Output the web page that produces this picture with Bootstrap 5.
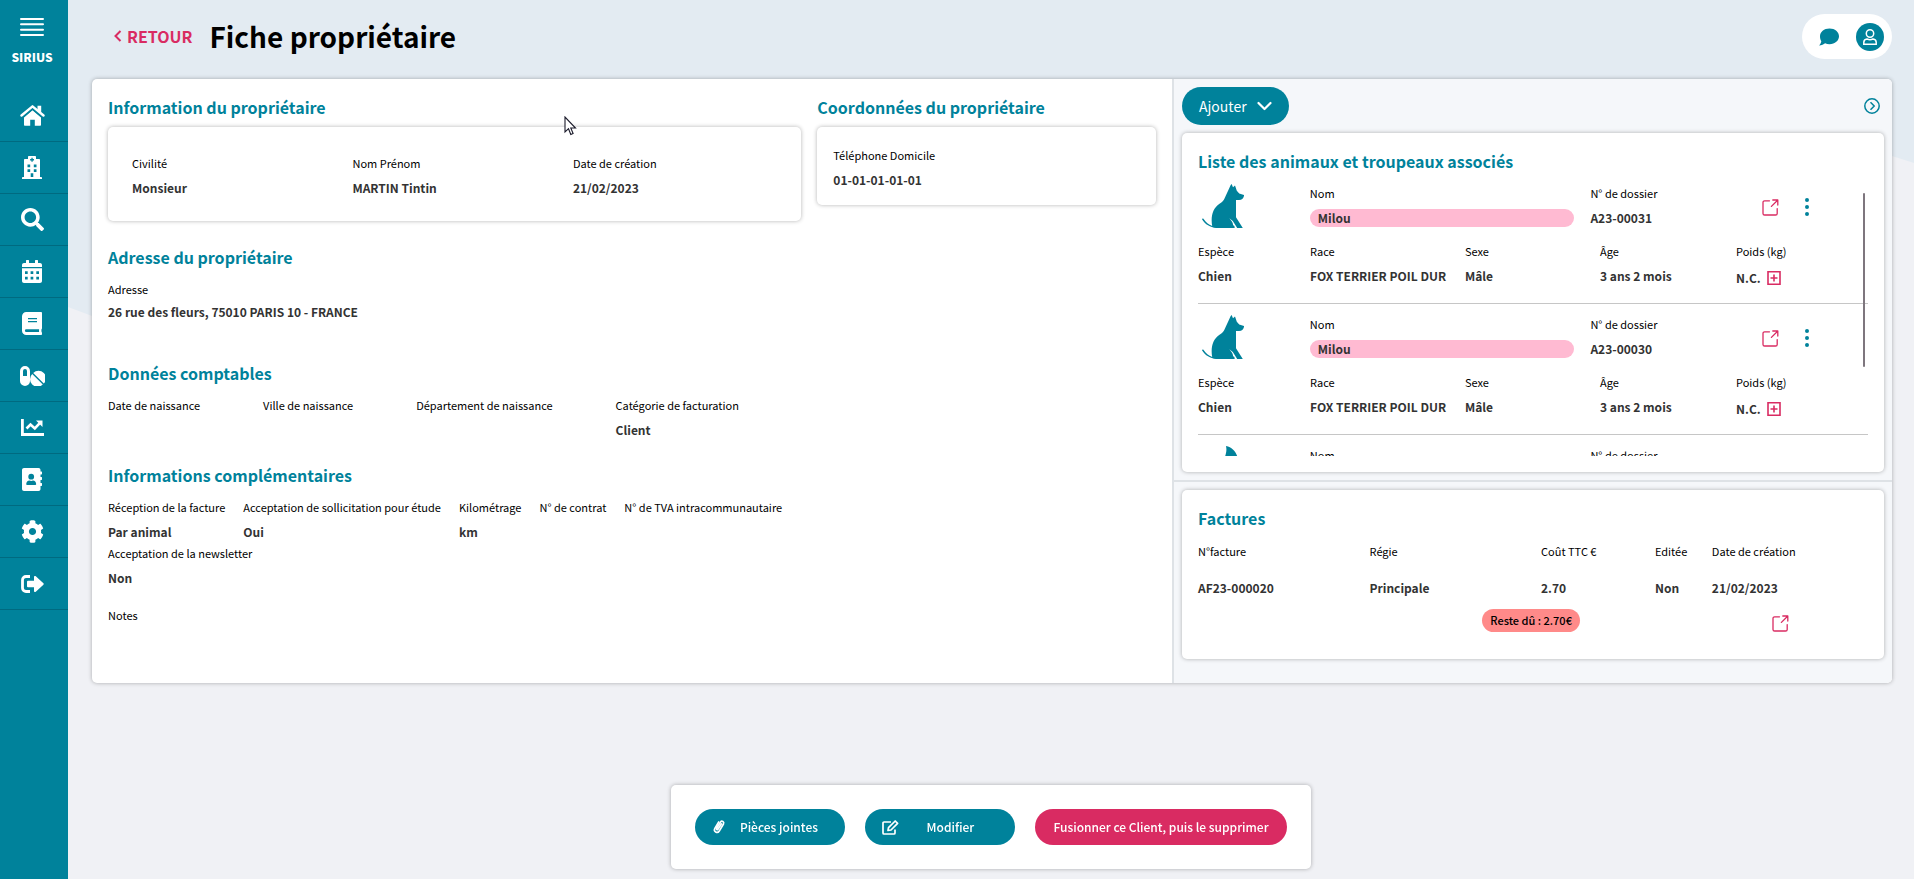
<!DOCTYPE html>
<html lang="fr">
<head>
<meta charset="utf-8">
<meta name="viewport" content="width=device-width, initial-scale=1">
<title>Sirius - Fiche propriétaire</title>
<link href="https://cdn.jsdelivr.net/npm/bootstrap@5.3.0/dist/css/bootstrap.min.css" rel="stylesheet">
<style>
  :root { --teal: #00829b; --pink: #d92b62; --line: #dee2e6; }
  body { font-family: "Noto Sans CJK SC", "Open Sans", sans-serif; font-size: 13px; color: #000; background: #f0f1f5; }
  svg { display: block; flex-shrink: 0; }

  .side-menu { width: 68px; background: var(--teal); }
  .side-menu .brand-box { height: 90px; padding: 18px 4px 0 0; gap: 10px; font-size: 12px; font-weight: 900; color: #fff; }
  .side-menu .brand-name { line-height: 22px; }
  .side-menu .nav-link { height: 52px; padding: 0 4px 0 0; border-bottom: 1px solid #006a80; color: #fff; }
  .side-menu .nav-link:hover { background: #00748b; }

  .page-area { min-width: 0; isolation: isolate; }
  .wave { position: absolute; inset: 0; width: 100%; height: 316px; z-index: -1; }
  .top-bar { padding: 14px 22px 20px 46px; }
  .back-link { font-size: 16px; font-weight: 700; line-height: 22px; padding-bottom: 2px; color: var(--pink); gap: 5px; }
  .page-title { font-size: 28px; font-weight: 700; line-height: 40px; padding-bottom: 2px; margin: 0 0 0 17px; }
  .user-pill { height: 45px; padding: 0 8px; gap: 16px; background: #fff; }

  .panel { border-radius: 5px; background: #fff; box-shadow: 0 0 4px rgba(0, 0, 0, .3); }
  .sheet { margin: 0 22px 110px 24px; overflow: hidden; }
  .sheet-left { width: 60%; padding: 16px; }
  .sheet-right { width: 40%; border-left: 2px solid var(--line); background: #f5f7fa; }
  .sheet-right .zone { padding: 8px; }
  .sheet-right .zone + .zone { border-top: 2px solid var(--line); padding-bottom: 24px; }

  .section-title { font-size: 16px; font-weight: 700; line-height: 24px; margin: 0; padding-bottom: 2px; color: var(--teal); }
  .fld-label { font-size: 11px; font-weight: 400; line-height: 18px; margin: 0; white-space: nowrap; }
  .fld-value { font-size: 12px; font-weight: 700; line-height: 24px; margin: 4px 0 0; color: #333; white-space: nowrap; }
  .id-card { margin-top: 6px; padding: 27px 24px 21px; }
  .phone-card { margin-top: 6px; padding: 19px 16px 13px; }
  .fields { margin-top: 9px; }
  .address .fld-value { margin-top: 2px; }
  .accounting { margin-top: 37px; }
  .accounting .fields { gap: 63px; }
  .extra { margin-top: 21px; }
  .extra .fields { gap: 18px; }

  .btn-pill { --bs-btn-color: #fff; --bs-btn-hover-color: #fff; --bs-btn-active-color: #fff; --bs-btn-bg: var(--teal); --bs-btn-hover-bg: #00748b; --bs-btn-active-bg: #006a80; border: 0; border-radius: 20px; }
  .btn-pink { --bs-btn-bg: var(--pink); --bs-btn-hover-bg: #c02455; --bs-btn-active-bg: #ab1f4b; }
  .btn-add { height: 38px; padding: 0 17px; font-size: 14px; gap: 10px; }
  .icon-btn { border: 0; padding: 0; background: none; color: var(--pink); }
  .icon-btn.teal { color: var(--teal); }
  .icon-btn.user-btn { width: 28px; height: 28px; background: var(--teal); color: #fff; }

  .side-card { padding: 17px 16px 16px; margin-top: 8px; }
  .side-card .section-title { line-height: 22px; padding-bottom: 1px; }
  .zone + .zone .side-card { margin-top: 0; padding-bottom: 27px; }
  .animal-list { height: 283px; overflow: hidden auto; scrollbar-width: none; }
  .animal-list::-webkit-scrollbar { display: none; }
  .animal { padding: 11px 0 15px; border-bottom: 1px solid #c6c6c6; }
  .animal-icon { color: var(--teal); }
  .animal-head, .animal-data { display: grid; }
  .animal-head { grid-template-columns: 112fr 281fr 166fr 28fr 46fr 38fr; margin-bottom: 12px; }
  .animal-data { grid-template-columns: 112fr 155fr 135fr 136fr 132fr; }
  .animal-data > div { min-width: 0; }
  .name-pill { margin: 7px 16px 0 0; padding-left: 8px; line-height: 18px; border-radius: 9px; background: #ffbad2; }
  .weight { line-height: 20px; padding-top: 4px; gap: 6px; }
  .scroll-thumb { position: absolute; top: 60px; right: 19px; width: 2px; height: 174px; border-radius: 1px; background: #7e767e; }

  .bill-table { table-layout: fixed; width: 100%; margin-top: 12px; }
  .bill-table th, .bill-table td { padding: 0; }
  .bill-table .fld-value { padding: 16px 0 9px; }
  .due { display: inline-block; padding: 0 8px; font-size: 11px; font-weight: 500; line-height: 23px; border-radius: 12px; background: #ff8a89; }
  .due-cell { padding-right: 75px !important; }
  .open-cell { padding-right: 79px !important; }

  .action-bar { left: 68px; bottom: 10px; pointer-events: none; }
  .action-bar .panel { padding: 24px; gap: 20px; pointer-events: auto; }
  .action-bar .btn { height: 36px; padding: 0 16px; font-size: 12px; font-weight: 500; }
  .action-bar .btn-icon { width: 150px; padding: 0 14px 0 17px; }
  .action-bar .btn-pink { padding: 0 18px; }
  .pointer { position: absolute; left: 496px; top: 116px; pointer-events: none; }
</style>
</head>
<body>
<svg class="d-none" aria-hidden="true">
  <symbol id="i-open" viewBox="0 0 17 17"><path d="M7.500 1.800H2.600A1.600 1.600 0 0 0 1 3.400v11A1.600 1.600 0 0 0 2.600 16h11a1.600 1.600 0 0 0 1.600-1.600V9.600M10.800 1h5v5M15.600 1.200 9.400 7.400" fill="none" stroke="currentColor" stroke-width="1.300" stroke-linecap="round" stroke-linejoin="round"/></symbol>
  <symbol id="i-dots" viewBox="0 0 4 18"><path d="M2 0a2 2 0 1 1 0 4 2 2 0 0 1 0-4zm0 7a2 2 0 1 1 0 4 2 2 0 0 1 0-4zm0 7a2 2 0 1 1 0 4 2 2 0 0 1 0-4z" fill="currentColor"/></symbol>
  <symbol id="i-plus" viewBox="0 0 14 14"><path d="M1 .8h12v12.400H1zM7 3.500v7M3.500 7h7" fill="none" stroke="currentColor" stroke-width="1.600"/></symbol>
  <symbol id="i-dog" viewBox="0 0 42 44"><path d="M22.500 14.500 28.700 1l.9-1 1.400 3.200L33 1.400l1.800 5.300 2.400 2.700 4.800 1.500c.2 2.600-1.700 4.900-5 5.200L34 16v17.200L40.800 44h-5.600L30.800 37l-3.400-2.700c2.200 2.700 3.700 4.600 3.700 7 .8.200 1.800.8 1.500 2.700H14C8.500 43.200 3 40.500 0 35.200c.3-.8 1-.8 1.600-.2 2.200 3.300 5 5.800 8.600 7-1.600-9 .2-17.500 7.300-22.300 2.900-1.600 4-3 5-5.200z" fill="currentColor"/></symbol>
  <symbol id="i-cat" viewBox="0 0 42 44"><path d="M24 0c6 1.200 9.500 5 11.500 11 1.500 6-3 8-5 9 5 8 5 16 4 24H14c-4-9 0-17 7-22-1-9 5-13 3-22z" fill="currentColor"/></symbol>
</svg>

<div class="d-flex min-vh-100">
  <nav class="side-menu nav flex-column flex-nowrap flex-shrink-0" aria-label="Menu principal">
    <div class="brand-box d-flex flex-column align-items-center">
      <button type="button" class="icon-btn text-white" aria-label="Menu"><svg width="24" height="18" viewBox="0 0 24 18"><path d="M1 1h22M1 6.300h22M1 11.700h22M1 17h22" stroke="currentColor" stroke-width="2" stroke-linecap="round"/></svg></button>
      <span class="brand-name">SIRIUS</span>
    </div>
    <a href="#" class="nav-link d-flex align-items-center justify-content-center" aria-label="Accueil"><svg width="25" height="21" viewBox="0 0 25 21" fill="currentColor"><path d="M12.500 5.300 21 12.400V20a.8.8 0 0 1-.8.800h-5.400v-6h-4.600v6H4.800A.8.8 0 0 1 4 20v-7.600z"/><path d="m1.500 11.300 11-9.300 11 9.300" fill="none" stroke="#00829b" stroke-width="4.400"/><path d="M17.500.8h3.700v7l-3.700-3z"/><path d="m1.500 10.500 11-9.200 11 9.200" fill="none" stroke="currentColor" stroke-width="2.400" stroke-linecap="round" stroke-linejoin="round"/></svg></a>
    <a href="#" class="nav-link d-flex align-items-center justify-content-center" aria-label="Clinique"><svg width="20" height="23" viewBox="0 0 20 23" fill="currentColor" fill-rule="evenodd"><path d="M6 2V.8C6 .3 6.300 0 6.800 0h6.400c.5 0 .8.300.8.800V3h3.200c.5 0 .8.400.8.800V21h1.200c.5 0 .8.400.8.800V23H0v-1.200c0-.4.300-.8.800-.8H2V3.800c0-.4.300-.8.800-.8H6zm3.400-.2v1.300H8.100v1.300h1.300v1.300h1.300V4.400H12V3.100h-1.300V1.800zM5.500 8.500v2.700h2.700V8.500zm6.300 0v2.700h2.700V8.500zm-6.300 4.700v2.700h2.700v-2.700zm6.300 0v2.700h2.700v-2.700zM8.700 17.300V21h2.600v-3.700z"/></svg></a>
    <a href="#" class="nav-link d-flex align-items-center justify-content-center" aria-label="Recherche"><svg width="23" height="23" viewBox="0 0 512 512" fill="currentColor"><path d="M505 442.700L405.300 343c-4.500-4.500-10.600-7-17-7H372c27.600-35.300 44-79.700 44-128C416 93.100 322.900 0 208 0S0 93.100 0 208s93.100 208 208 208c48.300 0 92.700-16.400 128-44v16.300c0 6.400 2.500 12.500 7 17l99.700 99.700c9.400 9.400 24.600 9.400 33.900 0l28.300-28.300c9.400-9.400 9.400-24.600.1-34zM208 336c-70.700 0-128-57.200-128-128 0-70.700 57.200-128 128-128 70.700 0 128 57.200 128 128 0 70.700-57.200 128-128 128z"/></svg></a>
    <a href="#" class="nav-link d-flex align-items-center justify-content-center" aria-label="Agenda"><svg width="20" height="23" viewBox="0 0 20 23" fill="currentColor" fill-rule="evenodd"><path d="M0 7V5c0-1.200.9-2 2-2h2V.6c0-.3.300-.6.6-.6h1.800c.3 0 .6.300.6.600V3h6V.6c0-.3.300-.6.600-.6h1.800c.3 0 .6.300.6.600V3h2c1.100 0 2 .8 2 2v2zM0 8.300h20V21c0 1.100-.9 2-2 2H2c-1.100 0-2-.9-2-2zm3 3V14h2.700v-2.700zm5.600 0V14h2.700v-2.700zm5.700 0V14H17v-2.700zM3 16.800v2.700h2.700v-2.700zm5.600 0v2.700h2.700v-2.700zm5.700 0v2.700H17v-2.700z"/></svg></a>
    <a href="#" class="nav-link d-flex align-items-center justify-content-center" aria-label="Registre"><svg width="20" height="23" viewBox="0 0 20 23" fill="currentColor" fill-rule="evenodd"><path d="M4.300 0H19c.6 0 1 .5 1 1.100v15.100c0 .4-.1.700-.4.900-.2.700-.2 2.300 0 3 .3.200.4.500.4.900v.9c0 .6-.4 1.100-1 1.100H4.300A4.300 4.300 0 0 1 0 18.700V4.300A4.300 4.300 0 0 1 4.300 0zM6 6v1.300h9V6zm0 3v1.300h9V9zM4.300 17.300a1.400 1.400 0 0 0 0 2.800h12.800c-.1-.8-.1-2 0-2.800z"/></svg></a>
    <a href="#" class="nav-link d-flex align-items-center justify-content-center" aria-label="Pharmacie"><svg width="25" height="20" viewBox="0 0 25 20" fill="currentColor" fill-rule="evenodd"><path d="M5 0a5 5 0 0 1 5 5v10a5 5 0 0 1-10 0V5a5 5 0 0 1 5-5zM3 10h4V5a2 2 0 0 0-4 0z"/><path d="M12.200 7.900 22.800 18.500a7 7 0 0 1-10.600-10.600zM13.200 6.900a7 7 0 0 1 10.600 10.600z"/></svg></a>
    <a href="#" class="nav-link d-flex align-items-center justify-content-center" aria-label="Statistiques"><svg width="23" height="17" viewBox="0 0 23 17" fill="none" stroke="currentColor" stroke-width="2.800"><path d="M1.400 0v15.500H23"/><path d="m5.500 9.500 4-4 4.300 4 5.200-5.600" stroke-width="2.600"/><path d="M15 1.500h6.500V8z" fill="currentColor" stroke="none"/></svg></a>
    <a href="#" class="nav-link d-flex align-items-center justify-content-center" aria-label="Contacts"><svg width="20" height="23" viewBox="0 0 20 23" fill="currentColor" fill-rule="evenodd"><path d="M2 0h14.500c1.200 0 2 .9 2 2v1.500h1c.3 0 .5.200.5.500v2c0 .3-.2.500-.5.500h-1V9h1c.3 0 .5.200.5.500v2c0 .3-.2.500-.5.500h-1v3h1c.3 0 .5.200.5.500v2c0 .3-.2.500-.5.500h-1v3c0 1.100-.8 2-2 2H2c-1.100 0-2-.9-2-2V2C0 .9.900 0 2 0zm7.200 5.800a2.900 2.900 0 1 0 0 5.800 2.900 2.900 0 0 0 0-5.800zM4.200 16.300c0 .5.400.8.900.8h8.200c.5 0 .9-.3.900-.8 0-2.300-1.500-3.700-3.200-3.700-.6.200-1.200.4-1.800.4s-1.200-.2-1.800-.4c-1.700 0-3.200 1.400-3.200 3.700z"/></svg></a>
    <a href="#" class="nav-link d-flex align-items-center justify-content-center" aria-label="Paramètres"><svg width="23" height="23" viewBox="0 0 512 512" fill="currentColor"><path d="M487.400 315.700l-42.600-24.600c4.300-23.200 4.300-47 0-70.200l42.600-24.600c4.900-2.800 7.100-8.600 5.500-14-11.100-35.600-30-67.800-54.700-94.600-3.800-4.100-10-5.100-14.800-2.300L380.800 110c-17.900-15.400-38.500-27.300-60.800-35.100V25.800c0-5.600-3.900-10.500-9.400-11.700-36.700-8.200-74.300-7.800-109.200 0-5.500 1.200-9.400 6.100-9.400 11.700V75c-22.200 7.900-42.800 19.800-60.800 35.100L88.700 85.500c-4.900-2.800-11-1.900-14.800 2.300-24.700 26.700-43.600 58.900-54.700 94.600-1.700 5.400.6 11.200 5.500 14L67.300 221c-4.300 23.200-4.300 47 0 70.200l-42.600 24.600c-4.900 2.800-7.100 8.600-5.500 14 11.100 35.600 30 67.800 54.700 94.600 3.800 4.100 10 5.100 14.800 2.300l42.600-24.600c17.900 15.400 38.500 27.300 60.800 35.100v49.200c0 5.600 3.900 10.500 9.400 11.700 36.700 8.200 74.300 7.800 109.200 0 5.500-1.200 9.400-6.100 9.400-11.700v-49.200c22.200-7.900 42.800-19.800 60.800-35.100l42.600 24.600c4.900 2.800 11 1.900 14.800-2.300 24.700-26.700 43.600-58.900 54.700-94.600 1.500-5.500-.7-11.300-5.600-14.100zM256 336c-44.100 0-80-35.900-80-80s35.900-80 80-80 80 35.900 80 80-35.900 80-80 80z"/></svg></a>
    <a href="#" class="nav-link d-flex align-items-center justify-content-center" aria-label="Déconnexion"><svg width="23" height="18" viewBox="0 0 23 18" fill="currentColor"><path d="M9 1.500H5A3.500 3.500 0 0 0 1.500 5v8A3.500 3.500 0 0 0 5 16.500h4" fill="none" stroke="currentColor" stroke-width="2.800"/><path d="M7 5.800h6V2c0-1 1.100-1.400 1.800-.7l7.600 7a1 1 0 0 1 0 1.400l-7.600 7c-.7.700-1.800.3-1.800-.7v-3.800H7a1 1 0 0 1-1-1V6.800a1 1 0 0 1 1-1z"/></svg></a>
  </nav>

  <div class="page-area position-relative flex-grow-1">
    <svg class="wave" viewBox="0 0 1846 316" preserveAspectRatio="none" aria-hidden="true"><path d="M0 0h1846v163l-22-7C1500 70 1200 316 700 316H24L0 307z" fill="#e3ebf2"/></svg>

    <header class="top-bar d-flex align-items-center">
      <a href="#" class="back-link d-flex align-items-center text-decoration-none"><svg width="8" height="12" viewBox="0 0 8 12"><path d="M6.500 1 1.500 6l5 5" fill="none" stroke="currentColor" stroke-width="2"/></svg>RETOUR</a>
      <h1 class="page-title">Fiche propriétaire</h1>
      <div class="user-pill d-flex align-items-center rounded-pill ms-auto">
        <button type="button" class="icon-btn teal ps-2" aria-label="Messages"><svg width="22" height="18" viewBox="0 0 22 18"><path d="M11.500.5C17 .5 21 4 21 8.300s-4 7.900-9.500 7.900c-1.600 0-3.100-.3-4.400-.9-1.400 1.100-3.400 2.200-6 2.200 1.200-1.200 2-2.700 2.200-4.200C2.500 12 2 10.300 2 8.300 2 4 6 .5 11.500.5z" fill="currentColor"/></svg></button>
        <button type="button" class="icon-btn user-btn rounded-circle d-flex align-items-center justify-content-center" aria-label="Compte"><svg width="14" height="16" viewBox="0 0 14 16" fill="none" stroke="currentColor" stroke-width="1.500"><circle cx="7" cy="4.500" r="3.700"/><path d="M4 10C2 10.300.8 11.500.8 13.300v1.900h12.400v-1.900c0-1.800-1.200-3-3.200-3.300-1.900.9-4.100.9-6 0z"/></svg></button>
      </div>
    </header>

    <main class="sheet panel d-flex">
      <div class="sheet-left">
        <div class="row gx-3">
          <section class="col-8">
            <h2 class="section-title">Information du propriétaire</h2>
            <div class="panel id-card">
              <dl class="row gx-3 mb-0">
                <div class="col-4"><dt class="fld-label">Civilité</dt><dd class="fld-value">Monsieur</dd></div>
                <div class="col-4"><dt class="fld-label">Nom Prénom</dt><dd class="fld-value">MARTIN Tintin</dd></div>
                <div class="col-4"><dt class="fld-label">Date de création</dt><dd class="fld-value">21/02/2023</dd></div>
              </dl>
            </div>
          </section>
          <section class="col-4">
            <h2 class="section-title">Coordonnées du propriétaire</h2>
            <dl class="panel phone-card mb-0"><dt class="fld-label">Téléphone Domicile</dt><dd class="fld-value">01-01-01-01-01</dd></dl>
          </section>
        </div>

        <section class="address mt-4">
          <h2 class="section-title">Adresse du propriétaire</h2>
          <dl class="fields mb-0"><dt class="fld-label">Adresse</dt><dd class="fld-value">26 rue des fleurs, 75010 PARIS 10 - FRANCE</dd></dl>
        </section>

        <section class="accounting">
          <h2 class="section-title">Données comptables</h2>
          <dl class="fields d-flex mb-0">
            <div><dt class="fld-label">Date de naissance</dt><dd class="fld-value"></dd></div>
            <div><dt class="fld-label">Ville de naissance</dt><dd class="fld-value"></dd></div>
            <div><dt class="fld-label">Département de naissance</dt><dd class="fld-value"></dd></div>
            <div><dt class="fld-label">Catégorie de facturation</dt><dd class="fld-value">Client</dd></div>
          </dl>
        </section>

        <section class="extra">
          <h2 class="section-title">Informations complémentaires</h2>
          <dl class="fields d-flex mb-0">
            <div><dt class="fld-label">Réception de la facture</dt><dd class="fld-value">Par animal</dd></div>
            <div><dt class="fld-label">Acceptation de sollicitation pour étude</dt><dd class="fld-value">Oui</dd></div>
            <div><dt class="fld-label">Kilométrage</dt><dd class="fld-value">km</dd></div>
            <div><dt class="fld-label">N° de contrat</dt><dd class="fld-value"></dd></div>
            <div><dt class="fld-label">N° de TVA intracommunautaire</dt><dd class="fld-value"></dd></div>
          </dl>
          <dl class="mb-3"><dt class="fld-label">Acceptation de la newsletter</dt><dd class="fld-value">Non</dd></dl>
          <p class="fld-label">Notes</p>
        </section>
      </div>

      <aside class="sheet-right">
        <div class="zone">
          <div class="d-flex align-items-center justify-content-between">
            <button type="button" class="btn btn-pill btn-add d-flex align-items-center">Ajouter<svg width="15" height="10" viewBox="0 0 15 10"><path d="m1.500 2 6 6 6-6" fill="none" stroke="currentColor" stroke-width="2.200" stroke-linecap="round" stroke-linejoin="round"/></svg></button>
            <button type="button" class="icon-btn teal me-1" aria-label="Replier"><svg width="16" height="16" viewBox="0 0 16 16" fill="none" stroke="currentColor" stroke-width="1.500"><circle cx="8" cy="8" r="7.200"/><path d="M6.500 4.300 10.200 8l-3.700 3.700"/></svg></button>
          </div>
          <section class="panel side-card position-relative">
            <h2 class="section-title">Liste des animaux et troupeaux associés</h2>
            <div class="animal-list" id="animals"></div>
            <span class="scroll-thumb"></span>
          </section>
        </div>
        <div class="zone">
          <section class="panel side-card">
            <h2 class="section-title">Factures</h2>
            <table class="bill-table">
              <colgroup><col style="width: 25.6%"><col style="width: 25.6%"><col style="width: 17%"><col style="width: 8.500%"><col></colgroup>
              <thead><tr><th class="fld-label">N°facture</th><th class="fld-label">Régie</th><th class="fld-label">Coût TTC €</th><th class="fld-label">Editée</th><th class="fld-label">Date de création</th></tr></thead>
              <tbody>
                <tr><td class="fld-value">AF23-000020</td><td class="fld-value">Principale</td><td class="fld-value">2.70</td><td class="fld-value">Non</td><td class="fld-value">21/02/2023</td></tr>
                <tr><td colspan="3" class="due-cell text-end"><span class="due">Reste dû : 2.70€</span></td><td colspan="2" class="open-cell align-bottom"><button type="button" class="icon-btn d-block ms-auto" aria-label="Ouvrir la facture"><svg width="17" height="17"><use href="#i-open"/></svg></button></td></tr>
              </tbody>
            </table>
          </section>
        </div>
      </aside>
    </main>

    <svg class="pointer" width="13" height="20" viewBox="0 0 13 20" aria-hidden="true"><path d="M1 1v15l3.500-3.300L6.800 18.500l2.300-1L6.800 12h4.700z" fill="#fff" stroke="#1b1b2b" stroke-width="1.100"/></svg>
  </div>
</div>

<footer class="action-bar position-fixed end-0 d-flex justify-content-center">
  <div class="panel d-flex">
    <button type="button" class="btn btn-pill btn-icon d-flex align-items-center"><svg width="14" height="16" viewBox="0 0 14 16"><path d="M9.500 4.800 6 10.200c-.7 1-2 .2-1.400-.9l3.900-6.200c1.200-1.900 4.100-.2 3 1.900L7.300 12c-1.900 3-6.200.5-4.500-2.600l3.900-6.500" fill="none" stroke="currentColor" stroke-width="1.600" stroke-linecap="round"/></svg><span class="flex-grow-1">Pièces jointes</span></button>
    <button type="button" class="btn btn-pill btn-icon d-flex align-items-center"><svg width="17" height="15" viewBox="0 0 17 15" fill="none" stroke="currentColor" stroke-width="1.700"><path d="M9 2H2a1 1 0 0 0-1 1v10a1 1 0 0 0 1 1h10a1 1 0 0 0 1-1V9.500"/><path d="m6 10.500.5-2.800L13.200 1l2.400 2.300L9 10z" stroke-linejoin="round"/></svg><span class="flex-grow-1">Modifier</span></button>
    <button type="button" class="btn btn-pill btn-pink">Fusionner ce Client, puis le supprimer</button>
  </div>
</footer>

<script src="https://cdn.jsdelivr.net/npm/bootstrap@5.3.0/dist/js/bootstrap.bundle.min.js"></script>
<script>
  const animals = [
    { icon: 'dog', name: 'Milou', file: 'A23-00031', species: 'Chien', breed: 'FOX TERRIER POIL DUR', sex: 'Mâle', age: '3 ans 2 mois' },
    { icon: 'dog', name: 'Milou', file: 'A23-00030', species: 'Chien', breed: 'FOX TERRIER POIL DUR', sex: 'Mâle', age: '3 ans 2 mois' },
    { icon: 'cat', name: '', file: '' }
  ];
  const field = (label, value) => `<div><div class="fld-label">${label}</div><div class="fld-value">${value}</div></div>`;
  document.getElementById('animals').innerHTML = animals.map(a => `
    <article class="animal">
      <div class="animal-head">
        <svg class="animal-icon ms-1" width="42" height="44"><use href="#i-${a.icon}"/></svg>
        <div><div class="fld-label">Nom</div><div class="fld-value name-pill">${a.name}</div></div>
        ${field('N° de dossier', a.file)}
        <button type="button" class="icon-btn d-flex align-items-center justify-content-center" aria-label="Ouvrir"><svg width="17" height="17"><use href="#i-open"/></svg></button>
        <button type="button" class="icon-btn teal d-flex align-items-center justify-content-center" aria-label="Actions"><svg width="4" height="18"><use href="#i-dots"/></svg></button>
      </div>
      ${a.species ? `<div class="animal-data">
        ${field('Espèce', a.species)}${field('Race', a.breed)}${field('Sexe', a.sex)}${field('Âge', a.age)}
        <div><div class="fld-label">Poids (kg)</div><div class="fld-value weight d-flex align-items-center">N.C. <button type="button" class="icon-btn" aria-label="Ajouter un poids"><svg width="14" height="14"><use href="#i-plus"/></svg></button></div></div>
      </div>` : ''}
    </article>`).join('');
</script>
</body>
</html>
